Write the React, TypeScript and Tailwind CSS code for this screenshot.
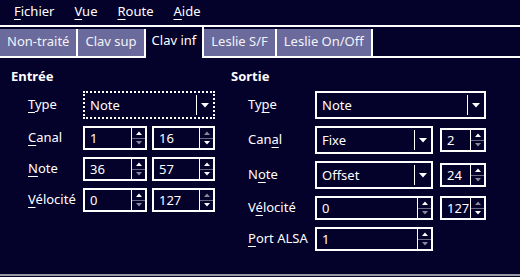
import React from "react";

const BG = "bg-[#04012b]";

function Mn({ pre = "", m, post = "" }: { pre?: string; m: string; post?: string }) {
  return (
    <span>
      {pre}
      <span className="underline decoration-1 underline-offset-[3px]">{m}</span>
      {post}
    </span>
  );
}

function Up({ on }: { on: boolean }) {
  return (
    <svg width="6" height="4" viewBox="0 0 6 4">
      <path d="M0 4 L3 0.5 L6 4Z" fill={on ? "#ffffff" : "#8a8a9a"} />
    </svg>
  );
}

function Down({ on }: { on: boolean }) {
  return (
    <svg width="6" height="4" viewBox="0 0 6 4">
      <path d="M0 0 L6 0 L3 3.5Z" fill={on ? "#ffffff" : "#8a8a9a"} />
    </svg>
  );
}

function Spin({
  value,
  className,
  up = true,
  down = false,
}: {
  value: string;
  className: string;
  up?: boolean;
  down?: boolean;
}) {
  return (
    <div className={`flex h-[24px] border-2 border-white ${BG} ${className}`}>
      <span className="flex flex-1 items-center pl-[5px] leading-none">{value}</span>
      <div className="flex w-[14px] flex-col border-l border-white">
        <div className="flex flex-1 items-center justify-center border-b border-[#6a6a80]">
          <Up on={up} />
        </div>
        <div className="flex flex-1 items-center justify-center">
          <Down on={down} />
        </div>
      </div>
    </div>
  );
}

function Combo({ value, className, focus = false }: { value: string; className: string; focus?: boolean }) {
  return (
    <div
      className={`flex h-[28px] items-center border-2 border-white ${focus ? "border-dotted" : ""} ${BG} ${className}`}
    >
      <span className="flex-1 pl-[5px] leading-none">{value}</span>
      <span className="h-[20px] w-px bg-white" />
      <span className="flex w-[16px] items-center justify-center">
        <svg width="8" height="5" viewBox="0 0 8 5">
          <path d="M0 0 L8 0 L4 4.5Z" fill="#ffffff" />
        </svg>
      </span>
    </div>
  );
}

function Row({ label, labelW, children }: { label: React.ReactNode; labelW: string; children: React.ReactNode }) {
  return (
    <div className="flex items-center">
      <div className={labelW}>{label}</div>
      <div className="flex gap-[5px]">{children}</div>
    </div>
  );
}

export default function App() {
  const tabs = ["Non-traité", "Clav sup", "Clav inf", "Leslie S/F", "Leslie On/Off"];
  return (
    <div
      className={`h-[277px] w-[520px] overflow-hidden ${BG} text-[13px] text-white`}
      style={{ fontFamily: '"Noto Sans", sans-serif' }}
    >
      {/* Menu bar */}
      <div className="flex h-[27px] items-center gap-[20px] border-b-2 border-white pl-[14px] pb-[2px]">
        <Mn m="F" post="ichier" />
        <Mn m="V" post="ue" />
        <Mn m="R" post="oute" />
        <Mn m="A" post="ide" />
      </div>

      {/* Tabs */}
      <div className="flex h-[31px] items-end border-b-2 border-white">
        {tabs.map((t) =>
          t === "Clav inf" ? (
            <div
              key={t}
              className={`-mb-[2px] flex h-[31px] items-center border-r-2 border-white ${BG} pl-[6px] pr-[6px] pb-[3px]`}
            >
              {t}
            </div>
          ) : (
            <div
              key={t}
              className="flex h-[27px] items-center border-r-2 border-white bg-[#6b6a9c] px-[7px] pb-[1px] text-[#f2f2f8]"
            >
              {t}
            </div>
          )
        )}
      </div>

      {/* Panel */}
      <div className="flex h-[218px] border-b-2 border-[#9a9aa6] pt-[9px]">
        {/* Entrée */}
        <div className="w-[231px] pl-[11px]">
          <div className="h-[18px] font-bold leading-[18px]">Entrée</div>
          <div className="mt-[6px] flex flex-col gap-[7px] pl-[17px]">
            <Row labelW="w-[55px]" label={<Mn m="T" post="ype" />}>
              <Combo value="Note" className="w-[132px]" focus />
            </Row>
            <Row labelW="w-[55px]" label={<Mn m="C" post="anal" />}>
              <Spin value="1" className="w-[64px]" />
              <Spin value="16" className="w-[63px]" up={false} down />
            </Row>
            <Row labelW="w-[55px]" label={<Mn m="N" post="ote" />}>
              <Spin value="36" className="w-[64px]" />
              <Spin value="57" className="w-[63px]" down />
            </Row>
            <Row labelW="w-[55px]" label={<Mn m="V" post="élocité" />}>
              <Spin value="0" className="w-[64px]" />
              <Spin value="127" className="w-[63px]" up={false} down />
            </Row>
          </div>
        </div>

        {/* Sortie */}
        <div className="flex-1">
          <div className="h-[18px] font-bold leading-[18px]">Sortie</div>
          <div className="mt-[6px] flex flex-col gap-[7px] pl-[17px]">
            <Row labelW="w-[67px]" label={<Mn pre="Ty" m="p" post="e" />}>
              <Combo value="Note" className="w-[171px]" />
            </Row>
            <div className="flex items-center">
              <div className="w-[67px]">
                <Mn pre="Can" m="a" post="l" />
              </div>
              <div className="flex items-center gap-[7px]">
                <Combo value="Fixe" className="w-[118px]" />
                <Spin value="2" className="w-[46px]" />
              </div>
            </div>
            <div className="flex items-center">
              <div className="w-[67px]">
                <Mn pre="N" m="o" post="te" />
              </div>
              <div className="flex items-center gap-[7px]">
                <Combo value="Offset" className="w-[118px]" />
                <Spin value="24" className="w-[46px]" />
              </div>
            </div>
            <div className="flex items-center">
              <div className="w-[67px]">
                <Mn pre="V" m="é" post="locité" />
              </div>
              <div className="flex items-center gap-[7px]">
                <Spin value="0" className="w-[118px]" />
                <Spin value="127" className="w-[46px]" up={false} down />
              </div>
            </div>
            <div className="flex items-center">
              <div className="w-[67px]">
                <Mn m="P" post="ort ALSA" />
              </div>
              <Spin value="1" className="w-[118px]" />
            </div>
          </div>
        </div>
      </div>
    </div>
  );
}
